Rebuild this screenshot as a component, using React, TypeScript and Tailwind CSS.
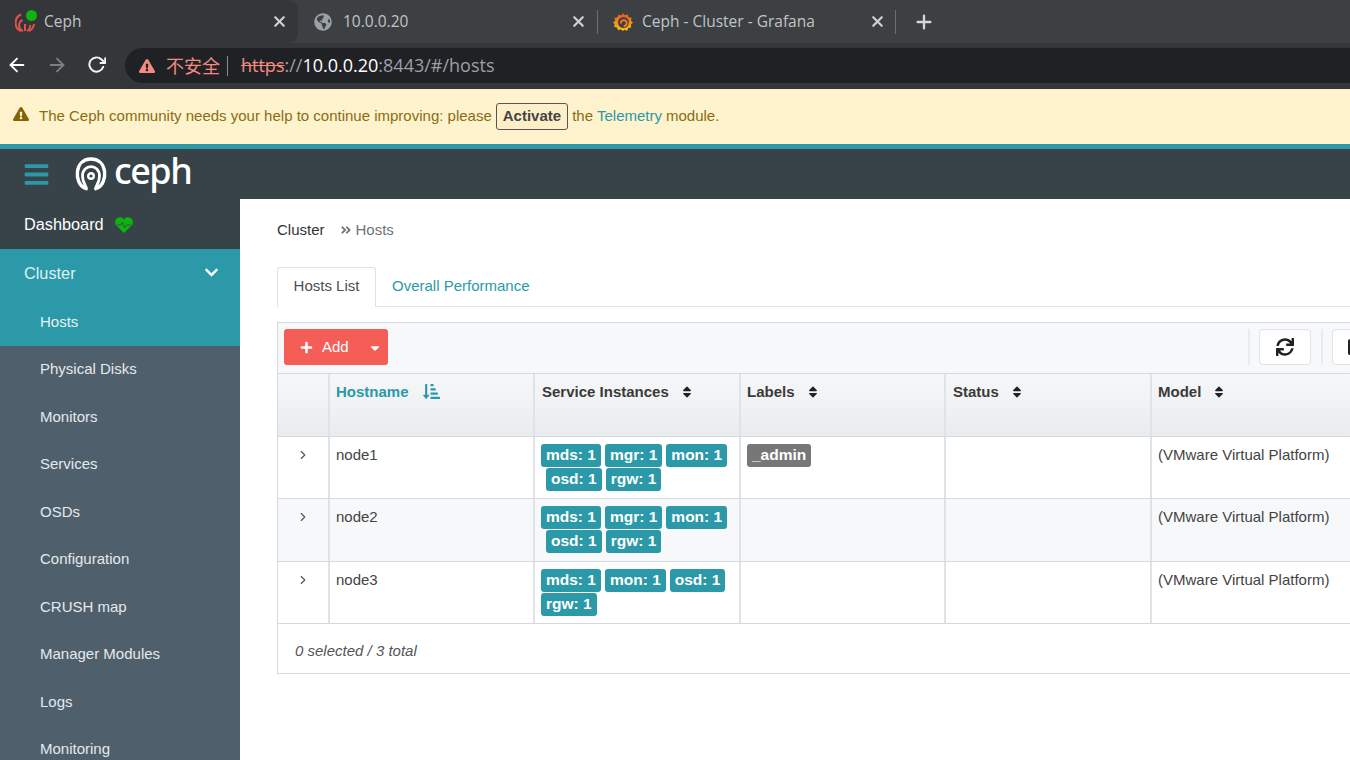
import React from 'react'
import { FaExclamationTriangle, FaChevronDown, FaPlus, FaCaretDown, FaSort, FaSortAmountDownAlt, FaSync, FaAngleDoubleRight, FaBars, FaGlobeAmericas, FaTable } from 'react-icons/fa'
import { FiArrowLeft, FiArrowRight, FiRotateCw, FiX, FiPlus, FiChevronRight } from 'react-icons/fi'

const side = ['Physical Disks', 'Monitors', 'Services', 'OSDs', 'Configuration', 'CRUSH map', 'Manager Modules', 'Logs', 'Monitoring']

const rows = [
  { name: 'node1', alt: false, h: 'h-[62px]', services: [['mds: 1', 'mgr: 1', 'mon: 1'], ['osd: 1', 'rgw: 1']], label: '_admin', indent: true },
  { name: 'node2', alt: true, h: 'h-[63px]', services: [['mds: 1', 'mgr: 1', 'mon: 1'], ['osd: 1', 'rgw: 1']], label: '', indent: true },
  { name: 'node3', alt: false, h: 'h-[62px]', services: [['mds: 1', 'mon: 1', 'osd: 1'], ['rgw: 1']], label: '', indent: false },
]

function CephFavicon() {
  return (
    <div className="relative w-[20px] h-[20px]">
      <svg viewBox="0 0 20 20" className="w-[20px] h-[20px]" fill="none" stroke="#e0524d" strokeWidth="2">
        <path d="M6 19 A9 9 0 0 1 6 2.500" />
        <path d="M14 19 A9 9 0 0 0 19 12" />
        <path d="M8 19 A6 6 0 0 1 7.500 8" />
        <path d="M12 19 A6 6 0 0 0 15 13" />
        <path d="M10 19 V12" />
      </svg>
      <div className="absolute top-[-2px] right-[-2px] w-[11px] h-[11px] rounded-full bg-[#0fb30f]" />
    </div>
  )
}

function GrafanaIcon() {
  return (
    <svg viewBox="0 0 20 20" className="w-[20px] h-[20px]">
      <defs>
        <linearGradient id="graf" x1="0" y1="0" x2="0" y2="1">
          <stop offset="0" stopColor="#e8502a" />
          <stop offset="1" stopColor="#fbca0a" />
        </linearGradient>
      </defs>
      <path fill="url(#graf)" d="M10 1l2 2.300 2.800-1 .8 2.900 3 .5-.6 3 2 1.900-2.100 2 .3 2.900-2.900.6-1.200 2.700-2.700-1L10 19l-2.300-1.700-2.600 1-1.100-2.800-2.900-.7.5-2.900L0 10.800l2.100-2-.5-3 2.900-.6.900-2.800 2.700 1z" />
      <circle cx="10.500" cy="10.500" r="5.500" fill="#4a3f3c" />
      <path d="M7.800 11.500a3 3 0 1 1 3 2.600" fill="none" stroke="#f58220" strokeWidth="1.800" />
    </svg>
  )
}

function CephLogo() {
  return (
    <svg viewBox="0 0 32 34" className="w-[32px] h-[34px]" fill="none" stroke="#fff" strokeWidth="3.400" strokeLinecap="round">
      <path d="M9.500 31 C-1 26 -1 2 16 2 C33 2 33 26 22.500 31" />
      <path d="M11.500 31 C11 27 7.500 25 7.500 18 C7.500 5.500 24.500 5.500 24.500 18 C24.500 25 21 27 20.500 31" transform="translate(0 1)" strokeWidth="2.800" />
      <circle cx="16" cy="19" r="2.800" strokeWidth="2.400" />
    </svg>
  )
}

function HeartIcon() {
  return (
    <svg viewBox="0 0 18 16" className="ml-[11px] w-[18px] h-[16px]">
      <path fill="#0fb30f" d="M9 16L1.500 8.500C-.5 6.500-.2 3 1.800 1.500 4-.3 7-.2 9 2.300 11-.2 14-.3 16.200 1.500c2 1.500 2.300 5 .3 7z" />
      <path fill="none" stroke="#2f5a35" strokeWidth="1" d="M2 8h4l1.500-3 2 6 1.500-3h5" />
    </svg>
  )
}

function Tab(props: any) {
  return (
    <div className={`flex items-center h-full ${props.w} ${props.active ? 'bg-[#35363a] rounded-tr-[10px] rounded-br-[10px]' : ''}`}>
      <div className={`${props.lead ?? 'w-[15px]'} shrink-0`} />
      {props.icon}
      <span className={`${props.gap ?? 'ml-[9px]'} flex-1 pt-[1px] text-[15.500px] text-[#c0c4c8] whitespace-nowrap`}>{props.title}</span>
      <FiX className={`text-[#cfd1d4] text-[17px] ${props.end ?? 'mr-[10px]'}`} strokeWidth={3} />
    </div>
  )
}

function Badge(props: any) {
  return (
    <span className={`inline-block h-[23px] leading-[22px] px-[5px] rounded-[3px] text-white text-[15.500px] font-bold whitespace-nowrap ${props.color ?? 'bg-[#2b99a8]'}`}>
      {props.children}
    </span>
  )
}

function Head(props: any) {
  return (
    <div className={`${props.w} shrink-0 border-r-2 border-[#dfe3e8] ${props.pad ?? 'pl-[7px]'} pt-[8px] flex items-start`}>
      <span className="text-[15px] font-bold text-[#3a3a3a] leading-[20px]">{props.title}</span>
      <FaSort className="ml-[11px] mt-[3px] text-[14px] text-[#222]" />
    </div>
  )
}

export default function App() {
  return (
    <div className="w-[1350px] h-[760px] overflow-hidden bg-white flex flex-col font-['Liberation_Sans',Arial,sans-serif]">
      <div className="h-[43px] bg-[#3c4043] flex items-center shrink-0 font-['Open_Sans',sans-serif]">
        <Tab active w="w-[298px]" title="Ceph" icon={<CephFavicon />} />
        <Tab w="w-[299px]" lead="w-[16px]" gap="ml-[11px]" title="10.0.0.20" icon={<FaGlobeAmericas className="text-[18px] text-[#9aa0a6]" />} />
        <div className="w-[1px] h-[24px] bg-[#6a6e72]" />
        <Tab w="w-[297px]" lead="w-[15px]" end="mr-[9px]" title="Ceph - Cluster - Grafana" icon={<GrafanaIcon />} />
        <div className="w-[1px] h-[24px] bg-[#6a6e72]" />
        <FiPlus className="ml-[17px] text-[22px] text-[#d5d7da]" strokeWidth={2.500} />
      </div>
      <div className="h-[46px] bg-[#35363a] shrink-0 flex items-start pt-[5px] font-['Open_Sans',sans-serif]">
        <FiArrowLeft className="ml-[6px] mt-[6px] text-[22px] text-white" strokeWidth={2} />
        <FiArrowRight className="ml-[18px] mt-[6px] text-[22px] text-[#7d8083]" strokeWidth={2} />
        <FiRotateCw className="ml-[19px] mt-[7px] text-[19px] text-[#f1f3f4]" strokeWidth={2.500} />
        <div className="ml-[19px] flex-1 h-[35px] bg-[#202124] rounded-l-full flex items-center pl-[14px] text-[18px] whitespace-nowrap">
          <FaExclamationTriangle className="text-[16px] text-[#f28b82]" />
          <span className="ml-[11px] text-[#f28b82] font-['Noto_Sans_CJK_SC',sans-serif]">不安全</span>
          <div className="ml-[7px] w-[1px] h-[20px] bg-[#8a8d90]" />
          <span className="ml-[13px] text-[#f28b82] line-through">https</span>
          <span className="text-[#9aa0a6]">://</span>
          <span className="text-white">10.0.0.20</span>
          <span className="text-[#9aa0a6]">:8443/#/hosts</span>
        </div>
      </div>
      <div className="h-[55px] bg-[#fff3cd] shrink-0 flex items-center pl-[13px] text-[15px] text-[#8a6c14] whitespace-nowrap">
        <FaExclamationTriangle className="text-[16px] text-[#856404] mb-[6px]" />
        <span className="ml-[10px]">The Ceph community needs your help to continue improving: please</span>
        <span className="ml-[4px] h-[27px] leading-[24px] px-[6px] border border-[#555] rounded-[3px] bg-[#fdf0c8] text-[#444] font-bold">Activate</span>
        <span className="ml-[4px]">the</span>
        <span className="ml-[4px] text-[#2b99a8]">Telemetry</span>
        <span className="ml-[4px]">module.</span>
      </div>
      <div className="h-[55px] bg-[#374249] border-t-[5px] border-[#2b99a8] shrink-0 flex items-center">
        <FaBars className="ml-[23px] text-[27px] text-[#2b99a8]" />
        <div className="ml-[25px] flex items-center">
          <CephLogo />
          <span className="ml-[7px] text-[36px] leading-[36px] text-white font-medium font-['Noto_Sans',sans-serif] mt-[-7px] tracking-[-1.500px]">ceph</span>
        </div>
      </div>
      <div className="flex flex-1 min-h-0">
        <div className="w-[240px] shrink-0 bg-[#4f5f6b] text-white text-[15px]">
          <div className="h-[50px] bg-[#374249] flex items-center pl-[24px] pt-[1px] text-[16.300px]">
            Dashboard
            <HeartIcon />
          </div>
          <div className="h-[48px] bg-[#2b99a8] flex items-center pl-[24px] pr-[21px] pt-[1px] justify-between text-[#dff1f3] text-[16.300px]">
            Cluster
            <FaChevronDown className="text-[15px] text-white mb-[2px]" />
          </div>
          <div className="h-[48.800px] pt-[1px] bg-[#2b99a8] flex items-center pl-[40px] text-[#e6f4f5]">Hosts</div>
          {side.map((s) => (
            <div key={s} className="h-[47.500px] flex items-center pl-[40px] text-[#e6e9eb]">{s}</div>
          ))}
        </div>
        <div className="flex-1 min-w-0 pl-[37px] pt-[22px] text-[15px] text-[#333]">
          <div className="flex items-center h-[18px]">
            <span>Cluster</span>
            <FaAngleDoubleRight className="ml-[15px] text-[12px] text-[#777]" />
            <span className="ml-[4px] text-[#6c757d]">Hosts</span>
          </div>
          <div className="mt-[28px] flex h-[40px] border-b border-[#dee2e6] w-[1100px]">
            <div className="w-[99px] h-[40px] pb-[2px] bg-white border border-b-0 border-[#dee2e6] rounded-t-[3px] flex items-center justify-center text-[#495057]">Hosts List</div>
            <div className="ml-[16px] pb-[1px] flex items-center text-[#2b99a8]">Overall Performance</div>
          </div>
          <div className="mt-[15px] w-[1200px] border border-[#d5d9de]">
            <div className="h-[51px] bg-[#f7f8fa] border-b border-[#d5d9de] flex items-start pt-[6px] pl-[6px]">
              <div className="h-[36px] w-[104px] bg-[#f55d57] rounded-[3px] flex items-center text-white pt-[1px]">
                <FaPlus className="ml-[16px] text-[13px]" />
                <span className="ml-[9px]">Add</span>
                <FaCaretDown className="ml-[19px] text-[14px]" />
              </div>
              <div className="ml-[860px] w-[2px] h-[36px] bg-[#e9ecef]" />
              <div className="ml-[9px] w-[52px] h-[36px] bg-white border border-[#dfe3e8] rounded-[4px] flex items-center justify-center">
                <FaSync className="text-[18px] text-[#222]" />
              </div>
              <div className="ml-[10px] w-[2px] h-[36px] bg-[#e9ecef]" />
              <div className="ml-[9px] w-[52px] h-[36px] bg-white border border-[#dfe3e8] rounded-[4px] flex items-center pl-[15px]">
                <FaTable className="text-[18px] text-[#222]" />
              </div>
            </div>
            <div className="h-[63px] flex bg-linear-to-b from-[#f6f7f9] to-[#e9ecef] border-b border-[#d5d9de]">
              <div className="w-[52px] shrink-0 border-r-2 border-[#dfe3e8]" />
              <div className="w-[205px] shrink-0 border-r-2 border-[#dfe3e8] pl-[6px] pt-[8px] flex items-start">
                <span className="text-[15px] font-bold text-[#2b99a8] leading-[20px]">Hostname</span>
                <FaSortAmountDownAlt className="ml-[14px] mt-[1px] text-[17px] text-[#2b99a8]" />
              </div>
              <Head w="w-[206px]" title="Service Instances" />
              <Head w="w-[205px]" pad="pl-[6px]" title="Labels" />
              <Head w="w-[206px]" title="Status" />
              <Head w="w-[300px]" pad="pl-[6px]" title="Model" />
            </div>
            {rows.map((r) => (
              <div key={r.name} className={`${r.h} flex border-b border-[#d5d9de] text-[15px] text-[#444] ${r.alt ? 'bg-[#f7f8fa]' : 'bg-white'}`}>
                <div className="w-[52px] shrink-0 border-r-2 border-[#dfe3e8] pl-[18px] pt-[11px]">
                  <FiChevronRight className="text-[14px] text-[#555]" />
                </div>
                <div className="w-[205px] shrink-0 border-r-2 border-[#dfe3e8] pl-[6px] pt-[7px]">{r.name}</div>
                <div className="w-[206px] shrink-0 border-r-2 border-[#dfe3e8] pl-[6px] pt-[7px] flex flex-col gap-[1px]">
                  {r.services.map((line, i) => (
                    <div key={i} className={`flex gap-[4px] ${i === 1 && r.indent ? 'pl-[5px]' : ''}`}>
                      {line.map((b) => <Badge key={b}>{b}</Badge>)}
                    </div>
                  ))}
                </div>
                <div className="w-[205px] shrink-0 border-r-2 border-[#dfe3e8] pl-[6px] pt-[7px]">
                  {r.label && <Badge color="bg-[#777]">{r.label}</Badge>}
                </div>
                <div className="w-[206px] shrink-0 border-r-2 border-[#dfe3e8]" />
                <div className="pl-[6px] pt-[7px] whitespace-nowrap">(VMware Virtual Platform)</div>
              </div>
            ))}
            <div className="h-[49px] flex items-center pl-[17px] pt-[5px] italic text-[#555]">0 selected / 3 total</div>
          </div>
        </div>
      </div>
    </div>
  )
}
